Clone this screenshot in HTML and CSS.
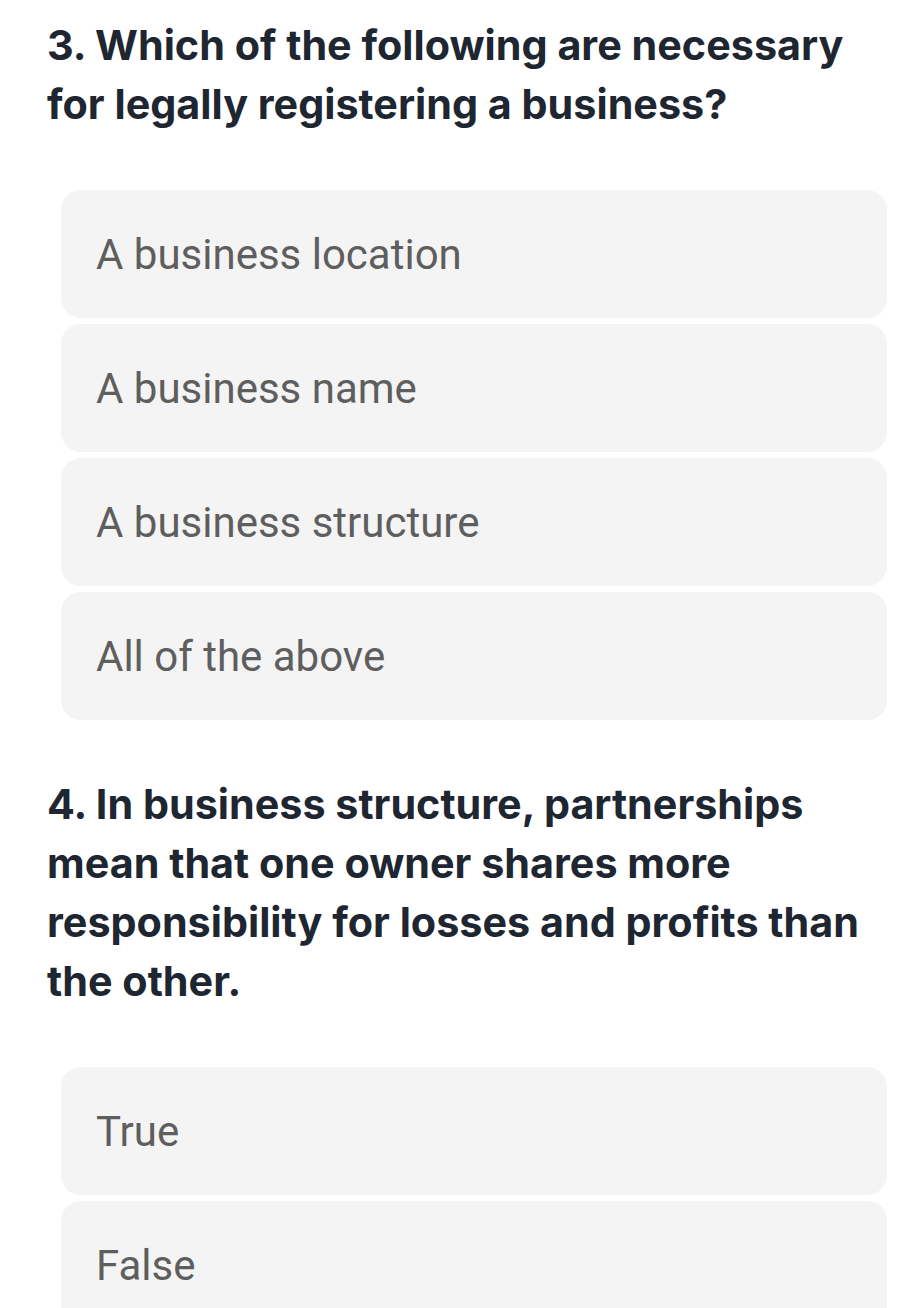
FILE: index.html
```
<!DOCTYPE html>
<html lang="en">
<head>
<meta charset="utf-8">
<title>Quiz</title>
<link rel="stylesheet" href="styles.css">
</head>
<body>
<main class="quiz">
  <section class="question">
    <h2 class="question-title">3. Which of the following are necessary for legally registering a business?</h2>
    <ul class="options">
      <li class="option">A business location</li>
      <li class="option">A business name</li>
      <li class="option">A business structure</li>
      <li class="option">All of the above</li>
    </ul>
  </section>
  <section class="question">
    <h2 class="question-title">4. In business structure, partnerships mean that one owner shares more responsibility for losses and profits than the other.</h2>
    <ul class="options">
      <li class="option">True</li>
      <li class="option">False</li>
    </ul>
  </section>
</main>
</body>
</html>
```
FILE: styles.css
```
html, body {
  margin: 0;
  padding: 0;
  background: #ffffff;
}

.quiz {
  padding: 16px 34px 0 47px;
  display: flex;
  flex-direction: column;
  gap: 55px;
}

.question {
  display: flex;
  flex-direction: column;
  gap: 56px;
}

.question-title {
  margin: 0;
  font-family: "Inter", "Open Sans", sans-serif;
  font-weight: 700;
  font-size: 41.3px;
  line-height: 59px;
  color: #1e2631;
}

.options {
  list-style: none;
  margin: 0 0 0 14px;
  padding: 0;
  display: flex;
  flex-direction: column;
  gap: 6px;
}

.option {
  height: 128px;
  box-sizing: border-box;
  display: flex;
  align-items: center;
  padding: 0 35px;
  background: #f4f4f4;
  border-radius: 20px;
  font-family: "Roboto", "Liberation Sans", sans-serif;
  font-size: 42px;
  font-weight: 400;
  color: #5e5e5e;
}
```
